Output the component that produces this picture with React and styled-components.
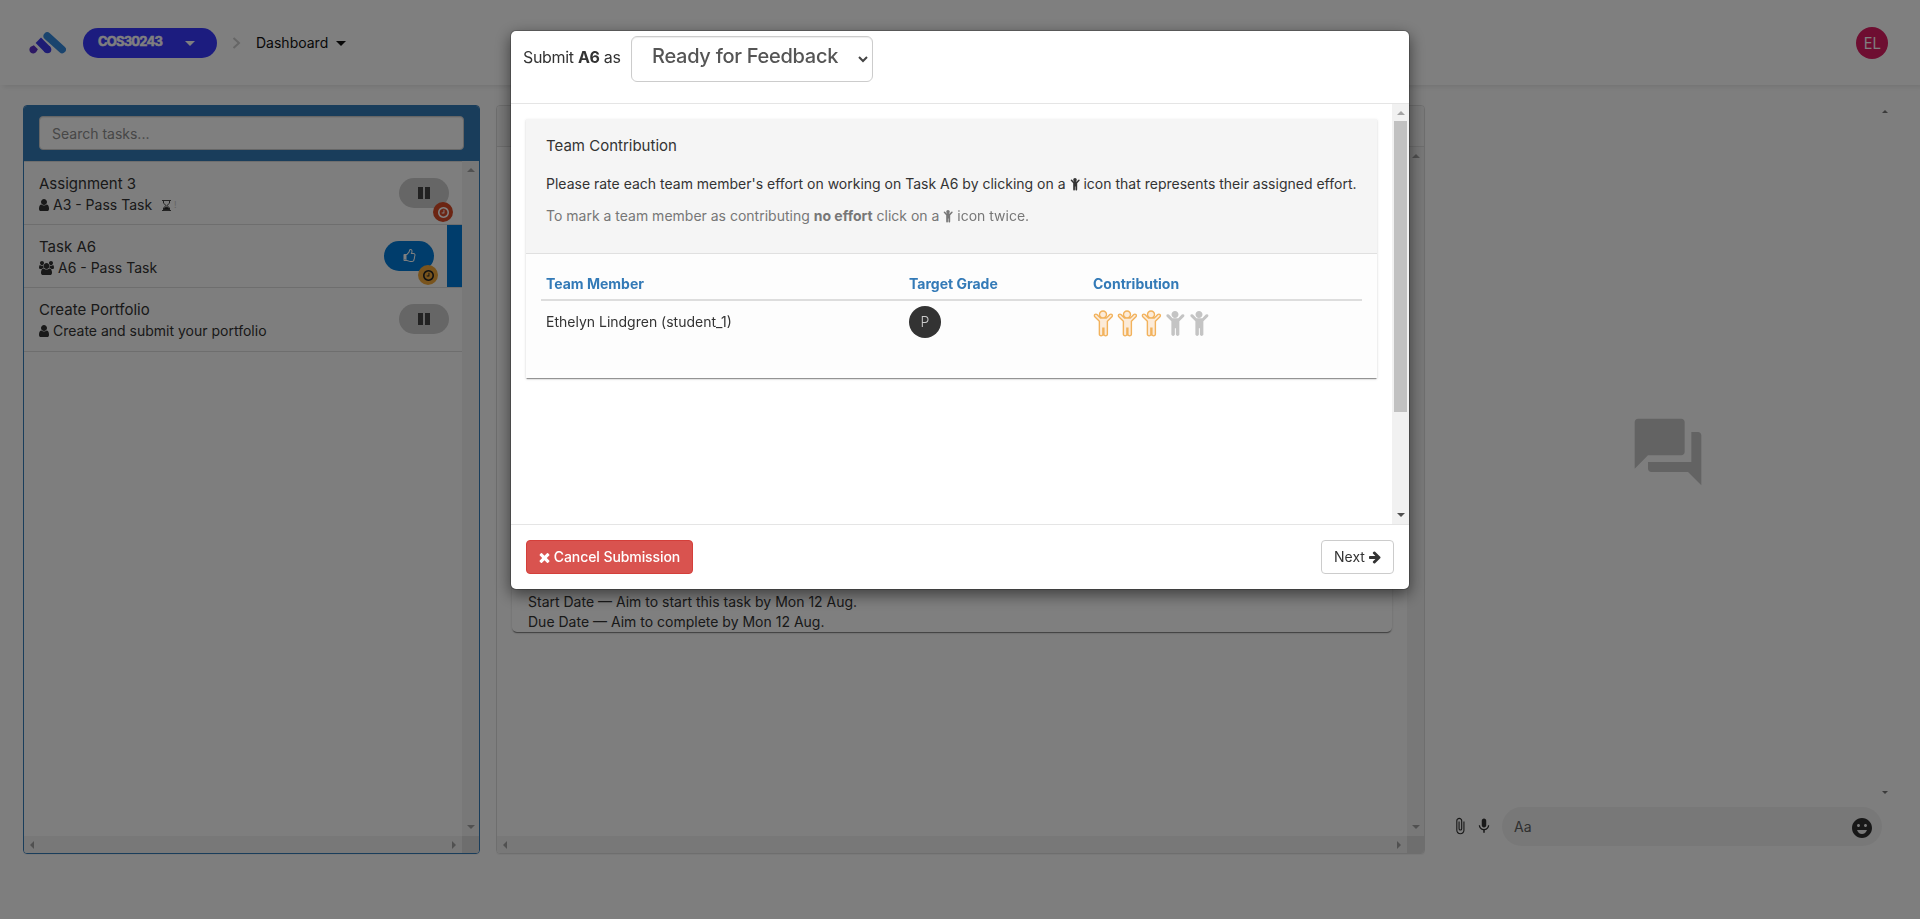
import React from "react";
import styled, { createGlobalStyle } from "styled-components";
import { MdQuestionAnswer, MdAttachFile, MdMic, MdEmojiEmotions } from "react-icons/md";

const Global = createGlobalStyle`
  *, *::before, *::after { box-sizing: border-box; }
  body { margin: 0; overflow: hidden; background: #fff; color: #333;
    font-family: Inter, "Liberation Sans", sans-serif; font-size: 14px; line-height: 20px; }
  svg { display: block; }
`;

const paths = {
  user: ["256 0 1280 1792", "M1536 1399q0 109-62.5 187t-150.5 78h-854q-88 0-150.5-78t-62.5-187q0-85 8.5-160.5t31.5-152 58.5-131 94-89 134.5-34.5q131 128 313 128t313-128q76 0 134.5 34.5t94 89 58.5 131 31.5 152 8.5 160.5zm-256-887q0 159-112.5 271.5t-271.5 112.5-271.5-112.5-112.5-271.5 112.5-271.5 271.5-112.5 271.5 112.5 112.5 271.5z"],
  users: ["64 0 1920 1792", "M657 896q-162 5-265 128h-134q-82 0-138-40.5t-56-118.5q0-353 124-353 6 0 43.5 21t97.5 42.5 119 21.5q67 0 133-23-5 37-5 66 0 139 81 256zm1071 637q0 120-73 189.5t-194 69.5h-874q-121 0-194-69.5t-73-189.5q0-53 3.5-103.5t14-109 26.5-108.5 43-97.5 62-81 85.5-53.5 111.5-20q10 0 43 21.5t73 48 107 48 135 21.5 135-21.5 107-48 73-48 43-21.5q61 0 111.5 20t85.5 53.5 62 81 43 97.5 26.5 108.5 14 109 3.5 103.5zm-1024-1277q0 106-75 181t-181 75-181-75-75-181 75-181 181-75 181 75 75 181zm704 384q0 159-112.5 271.5t-271.5 112.5-271.5-112.5-112.5-271.5 112.5-271.5 271.5-112.5 271.5 112.5 112.5 271.5zm576 225q0 78-56 118.5t-138 40.5h-134q-103-123-265-128 81-117 81-256 0-29-5-66 66 23 133 23 59 0 119-21.5t97.5-42.5 43.5-21q124 0 124 353zm-128-609q0 106-75 181t-181 75-181-75-75-181 75-181 181-75 181 75 75 181z"],
  times: ["256 0 1280 1792", "M1490 1322q0 40-28 68l-136 136q-28 28-68 28t-68-28l-294-294-294 294q-28 28-68 28t-68-28l-136-136q-28-28-28-68t28-68l294-294-294-294q-28-28-28-68t28-68l136-136q28-28 68-28t68 28l294 294 294-294q28-28 68-28t68 28l136 136q28 28 28 68t-28 68l-294 294 294 294q28 28 28 68z"],
  arrow: ["128 0 1536 1792", "M1600 960q0 54-37 91l-651 651q-39 37-91 37-51 0-90-37l-75-75q-38-38-38-91t38-91l293-293h-704q-52 0-84.5-37.5t-32.5-90.5v-128q0-53 32.5-90.5t84.5-37.5h704l-293-294q-38-36-38-90t38-90l75-75q38-38 90-38 53 0 91 38l651 651q37 35 37 90z"],
  thumb: ["64 0 1664 1792", "M384 1344q0-26-19-45t-45-19-45 19-19 45 19 45 45 19 45-19 19-45zm1152-576q0-51-39-89.5t-89-38.5h-352q0-58 48-159.5t48-160.5q0-98-32-145t-128-47q-26 26-38 85t-30.5 125.5-59.5 109.5q-22 23-77 91-4 5-23 30t-31.5 41-34.5 42.5-40 44-38.5 35.5-40 27-35.5 9h-32v640h32q13 0 31.5 3t33 6.5 38 11 35 11.5 35.5 12.5 29 10.5q211 73 342 73h121q192 0 192-167 0-26-5-56 30-16 47.5-52.5t17.5-73.5-18-69q53-50 53-119 0-25-10-55.5t-25-47.5q32-1 53.5-47t21.5-81zm128-1q0 89-49 163 9 33 9 69 0 77-38 144 3 21 3 43 0 101-60 178 1 139-85 219.5t-227 80.5h-129q-96 0-189.5-22.5t-216.5-65.5q-116-40-138-40h-288q-53 0-90.5-37.5t-37.5-90.5v-640q0-53 37.5-90.5t90.5-37.5h274q36-24 137-155 58-75 107-128 24-25 35.5-85.5t30.5-126.5 62-108q39-37 90-37 84 0 151 32.5t102 101.5 35 186q0 93-48 192h176q104 0 180 76t76 179z"],
  child: ["256 0 1280 1792", "M1468 492l-292 292v824q0 46-33 79t-79 33-79-33-33-79v-384h-64v384q0 46-33 79t-79 33-79-33-33-79v-824l-292-292q-28-28-28-68t28-68q29-28 68.5-28t67.5 28l228 228h368l228-228q28-28 68-28t68 28q28 29 28 68.5t-28 67.5zm-348-140q0 93-65.5 158.5t-158.5 65.5-158.5-65.5-65.5-158.5 65.5-158.5 158.5-65.5 158.5 65.5 65.5 158.5z"],
  clock: ["128 128 1536 1536", "M1024 544v448q0 14-9 23t-23 9h-320q-14 0-23-9t-9-23v-64q0-14 9-23t23-9h224v-352q0-14 9-23t23-9h64q14 0 23 9t9 23zm416 352q0-148-73-273t-198-198-273-73-273 73-198 198-73 273 73 273 198 198 273 73 273-73 198-198 73-273zm224 0q0 209-103 385.5t-279.5 279.5-385.5 103-385.5-103-279.5-279.5-103-385.5 103-385.5 279.5-279.5 385.5-103 385.5 103 279.5 279.5 103 385.5z"],
  pause: ["0 0 12 12", "M0 0h5v12h-5zM7 0h5v12h-5z"],
};

const Glyph = ({ name, w, h, ...rest }) => (
  <svg width={w} height={h} viewBox={paths[name][0]} fill="currentColor" overflow="visible" {...rest}>
    <path d={paths[name][1]} />
  </svg>
);

const Page = styled.div`height: 919px; display: flex; flex-direction: column; background: #fdfdfd;`;
const Header = styled.header`
  height: 85px; flex: none; padding: 1px 32px 0 29px; display: flex; align-items: center;
  background: #fff; box-shadow: 3px 2px 5px rgba(0, 0, 0, 0.09);
`;
const UnitPill = styled.div`
  width: 134px; height: 30px; margin-left: 17px; padding: 0 22px 0 15px; border-radius: 15px;
  background: #3939ff; color: #fff; display: flex; justify-content: space-between; align-items: center;
`;
const UnitCode = styled.span`
  font: 700 13px/18px Inter, sans-serif; letter-spacing: -0.8px; -webkit-text-stroke: 0.5px; margin-top: -5px;
`;
const Caret = styled.i`border: 5px solid transparent; border-top-color: currentColor; border-bottom: 0; margin-top: 1px;`;
const CrumbArrow = styled.svg`margin-left: 15px;`;
const Crumb = styled.div`display: flex; align-items: center; gap: 8px; color: #111; margin-left: 15px;`;
const Avatar = styled.div`
  width: 32px; height: 32px; border-radius: 50%; background: #dc1d62; color: #fff; margin-left: auto;
  display: flex; align-items: center; justify-content: center; font: 16px/32px "Open Sans", sans-serif;
`;

const Columns = styled.main`flex: 1; display: flex; align-items: flex-start; padding: 20px 35px 0 23px;`;
const Panel = styled.section`
  width: ${(p) => p.$w}px; height: 749px; margin-right: ${(p) => p.$gap}px; display: flex; flex-direction: column;
  border: 1px solid ${(p) => p.$line}; border-radius: 4px; overflow: hidden;
  box-shadow: 0 1px 1px rgba(0, 0, 0, 0.05);
`;
const SearchBar = styled.div`
  height: 55px; flex: none; background: #337ab7; padding: 10px 15px 0;
`;
const SearchInput = styled.div`
  height: 34px; border: 1px solid #ccc; border-radius: 4px; background: #fff; padding: 7px 12px;
  line-height: 20px; color: #8e8e8e; box-shadow: inset 0 1px 1px rgba(0, 0, 0, 0.075);
`;
const PlainBar = styled.div`height: 41px; flex: none; background: #f5f5f5; border-bottom: 1px solid #ddd;`;
const Scroller = styled.div`
  flex: 1; min-height: 0; display: grid; grid-template: minmax(0, 1fr) 17px / minmax(0, 1fr) 17px;
`;
const Track = styled.div`
  background: #f1f1f1; color: #a3a3a3; display: flex; justify-content: space-between; align-items: center;
  flex-direction: ${(p) => (p.$row ? "row" : "column")}; padding: ${(p) => (p.$row ? "0 6px" : "7px 0")};
`;
const Corner = styled.div`background: #dcdcdc;`;
const Tri = styled.i`
  flex: none; border: ${(p) => p.$s || 4}px solid transparent;
  border-${(p) => p.$to}: 0;
  border-${(p) => ({ top: "bottom", bottom: "top", left: "right", right: "left" })[p.$to]}-color: ${(p) => p.$c || "#a3a3a3"};
`;

const TaskRow = styled.div`
  height: 63px; border-bottom: 1px solid #ddd; display: flex; padding-left: 15px;
  ${(p) => p.$first && "height: 64px; border-top: 1px solid #ddd;"}
  ${(p) => p.$last && "height: 64px;"}
`;
const TaskText = styled.div`flex: 1; padding-top: 10px;`;
const TaskTitle = styled.div`font-size: 15px; line-height: 23px; height: 23px;`;
const TaskMeta = styled.div`display: flex; align-items: center; gap: 4px; height: 20px; font-size: 14px;`;
const Late = styled.span`display: flex; align-items: center; margin-left: 6px; gap: 3px; font-size: 9px; color: #ccc;`;
const StatusPill = styled.div`
  position: relative; width: 50px; height: 30px; margin: 16px 13px 0 0; border-radius: 15px;
  background: ${(p) => p.$bg}; color: ${(p) => p.$fg}; display: flex; align-items: center; justify-content: center;
`;
const Badge = styled.span`
  position: absolute; right: -4px; bottom: -14px; width: 20px; height: 20px; border-radius: 50%;
  background: ${(p) => p.$bg}; color: ${(p) => p.$fg}; display: flex; align-items: center; justify-content: center;
`;
const SelectedBar = styled.div`width: 15px; background: #007bd8;`;

const DatesPane = styled.div`padding: 0 15px;`;
const DatesCard = styled.div`
  height: 485px; padding: 0 16px; border-radius: 5px; background: #fff; display: flex; flex-direction: column;
  justify-content: flex-end; box-shadow: 0 2px 1px -1px rgba(0, 0, 0, 0.35), 0 1px 1px rgba(0, 0, 0, 0.14), 0 1px 3px rgba(0, 0, 0, 0.12);
`;
const DateLine = styled.div`line-height: 20px;`;

const Chat = styled.section`
  flex: 1; height: 749px; display: flex; flex-direction: column;
`;
const ChatBody = styled.div`height: 700px; display: flex; color: #c6c6c6; padding-left: 1px;`;
const ChatEmpty = styled.div`flex: 1; display: flex; justify-content: center; align-items: flex-start; padding: 307px 0 0 27px;`;
const ChatTrack = styled.div`width: 6px; padding: 5px 0 11px; margin-right: -3px; display: flex; flex-direction: column; justify-content: space-between;`;
const Composer = styled.div`display: flex; align-items: center; height: 39px; margin-top: 2px; padding: 0 3px 0 26px; color: #303030;`;
const ComposerIcons = styled.div`display: flex; gap: 6px; padding-bottom: 2px;`;
const MessageBox = styled.div`
  flex: 1; height: 39px; margin-left: 9px; padding: 2px 8px 0 12px; border-radius: 20px; background: #f1f1f1;
  display: flex; align-items: center; justify-content: space-between; color: #606060;
`;
const Placeholder = styled.span`padding-bottom: 2px;`;

const Backdrop = styled.div`position: fixed; inset: 0; background: rgba(0, 0, 0, 0.5); display: flex; justify-content: center; align-items: flex-start; padding-top: 30px;`;
const Modal = styled.div`
  width: 900px; height: 560px; background: #fff; background-clip: padding-box; border: 1px solid rgba(0, 0, 0, 0.2);
  border-radius: 6px; box-shadow: 0 5px 15px rgba(0, 0, 0, 0.5); display: flex; flex-direction: column; overflow: hidden;
`;
const ModalHeader = styled.div`height: 73px; border-bottom: 1px solid #e5e5e5; display: flex; padding: 5px 12px;`;
const SubmitLabel = styled.div`font-size: 16px; letter-spacing: -0.32px; line-height: 22px; margin-top: 10px; width: 108px; white-space: nowrap;`;
const Select = styled.div`
  width: 242px; height: 46px; border: 1px solid #ccc; border-radius: 6px; padding: 7px 4px 0 20px;
  font-size: 20px; font-weight: 500; letter-spacing: -0.28px; line-height: 24px; color: #555; display: flex; justify-content: space-between;
  box-shadow: inset 0 1px 1px rgba(0, 0, 0, 0.075); white-space: nowrap;
`;
const SelectArrow = styled.svg`margin-top: 12px;`;
const ModalBody = styled.div`height: 420px; display: flex; padding-left: 15px;`;
const ModalScroll = styled.div`width: 17px; background: #f1f1f1; display: flex; flex-direction: column; align-items: center; padding: 7px 0 7px;`;
const Thumb = styled.div`width: 13px; height: 291px; margin: 6px 0 auto; background: #c1c1c1;`;
const TeamCard = styled.div`
  width: 851px; height: 259px; margin: 15px 15px 0 0; background: #fdfdfd; display: flex; flex-direction: column;
  box-shadow: 0 2px 1px -1px rgba(0, 0, 0, 0.28), 0 1px 1px rgba(0, 0, 0, 0.14), 0 1px 3px rgba(0, 0, 0, 0.12);
`;
const TeamIntro = styled.div`height: 135px; background: #f5f5f5; border-bottom: 1px solid #e0e0e0; padding: 16px 0 0 20px; white-space: nowrap;`;
const Heading = styled.div`font-size: 15px; line-height: 22px;`;
const Para = styled.p`margin: ${(p) => p.$mt}px 0 0; line-height: 20px; color: ${(p) => p.$c || "#333"};`;
const InlineChild = styled(Glyph)`display: inline-block; vertical-align: -2px;`;
const Table = styled.div`margin: 20px 15px 0;`;
const Row = styled.div`display: grid; grid-template-columns: 363px 184px 1fr; padding-left: 5px; align-items: center; height: ${(p) => p.$h}px;`;
const HeadRow = styled(Row)`color: #337ab7; font-weight: 700; border-bottom: 2px solid #ddd; padding-bottom: 6px;`;
const Grade = styled.div`
  width: 32px; height: 32px; border-radius: 50%; background: #333; color: #ccc;
  display: flex; align-items: center; justify-content: center; font-weight: 300;
`;
const Rating = styled.div`display: flex; gap: 4px; color: #c4c4c4; padding-top: 1px;`;
const ModalFooter = styled.div`height: 65px; border-top: 1px solid #e5e5e5; padding: 15px; display: flex; justify-content: space-between;`;
const Button = styled.button`
  height: 34px; width: ${(p) => p.$w}px; border: 1px solid ${(p) => (p.$danger ? "#d43f3a" : "#ccc")}; border-radius: 4px;
  background: ${(p) => (p.$danger ? "#d9534f" : "#fff")}; color: ${(p) => (p.$danger ? "#fff" : "#333")};
  font: ${(p) => (p.$danger ? 500 : 400)} 14px/20px Inter, sans-serif; display: flex; align-items: center; justify-content: center; gap: 4px; padding: 0;
  white-space: nowrap; letter-spacing: ${(p) => (p.$danger ? "-0.08px" : 0)};
`;

const Logo = () => (
  <svg width="37" height="23" viewBox="0 0 37 23">
    <g stroke="#3d39e8" fill="none" strokeWidth="7.6">
      <path d="M9.3 8.3L18.5 17.5" />
      <path d="M18.5 17.500h.01" strokeLinecap="round" />
    </g>
    <path d="M18.3 4.100L33.1 17.500" stroke="#3489dd" strokeWidth="7.6" strokeLinecap="round" />
    <path d="M4.900 13.200L8.900 17.200L7.200 20A3.800 3.800 0 1 1 1.700 14.800Z" fill="#5a30c8" />
  </svg>
);

const tasks = [
  { title: "Assignment 3", meta: "A3 - Pass Task", icon: "user", late: true, badge: ["#d84a26", "#fff"] },
  { title: "Task A6", meta: "A6 - Pass Task", icon: "users", selected: true, badge: ["#f2a93b", "#222"] },
  { title: "Create Portfolio", meta: "Create and submit your portfolio", icon: "user" },
];

const Task = ({ task, first, last }) => (
  <TaskRow $first={first} $last={last}>
    <TaskText>
      <TaskTitle>{task.title}</TaskTitle>
      <TaskMeta>
        <Glyph name={task.icon} w={task.icon === "users" ? 15 : 10} h={14} />
        {task.meta}
        {task.late && (
          <Late>
            <svg width="9" height="11" viewBox="0 0 9 11" fill="none" stroke="#333" strokeWidth=".9">
              <path d="M0 .5h9M0 10.5h9M1.5 1v2.2L4 5.5 1.5 8v2.5M7.5 1v2.2L5 5.5 7.5 8v2.5" />
              <path d="M2 9.5V8.5L4.500 7 7 8.500V9.500z" fill="#222" />
            </svg>
            <span>!</span>
          </Late>
        )}
      </TaskMeta>
    </TaskText>
    <StatusPill $bg={task.selected ? "#007bd8" : "#ccc"} $fg={task.selected ? "#fff" : "#444"}>
      <Glyph name={task.selected ? "thumb" : "pause"} w={task.selected ? 13 : 12} h={task.selected ? 14 : 12} />
      {task.badge && (
        <Badge $bg={task.badge[0]} $fg={task.badge[1]}><Glyph name="clock" w={11} h={11} /></Badge>
      )}
    </StatusPill>
    {task.selected && <SelectedBar />}
  </TaskRow>
);

const ScrollArea = ({ children }) => (
  <Scroller>
    <div>{children}</div>
    <Track><Tri $to="top" /><Tri $to="bottom" /></Track>
    <Track $row><Tri $to="left" /><Tri $to="right" /></Track>
    <Corner />
  </Scroller>
);

export default function App() {
  return (
    <>
      <Global />
      <Page>
        <Header>
          <Logo />
          <UnitPill><UnitCode>COS30243</UnitCode><Caret /></UnitPill>
          <CrumbArrow width="9" height="12" viewBox="0 0 9 12" fill="none" stroke="#ccc" strokeWidth="2">
            <path d="M1.500 1l5.500 5-5.500 5" />
          </CrumbArrow>
          <Crumb>Dashboard<Caret /></Crumb>
          <Avatar>EL</Avatar>
        </Header>
        <Columns>
          <Panel $w={457} $gap={16} $line="#337ab7">
            <SearchBar><SearchInput>Search tasks...</SearchInput></SearchBar>
            <ScrollArea>
              {tasks.map((t, i) => <Task key={t.title} task={t} first={i === 0} last={i === 2} />)}
            </ScrollArea>
          </Panel>
          <Panel $w={929} $gap={0} $line="#ddd">
            <PlainBar />
            <ScrollArea>
              <DatesPane>
                <DatesCard>
                  <DateLine>Start Date — Aim to start this task by Mon 12 Aug.</DateLine>
                  <DateLine>Due Date — Aim to complete by Mon 12 Aug.</DateLine>
                </DatesCard>
              </DatesPane>
            </ScrollArea>
          </Panel>
          <Chat>
            <ChatBody>
              <ChatEmpty><MdQuestionAnswer size={80} /></ChatEmpty>
              <ChatTrack><Tri $to="top" $s={3} $c="#777" /><Tri $to="bottom" $s={3} $c="#777" /></ChatTrack>
            </ChatBody>
            <Composer>
              <ComposerIcons><MdAttachFile size={18} /><MdMic size={18} /></ComposerIcons>
              <MessageBox><Placeholder>Aa</Placeholder><MdEmojiEmotions size={24} color="#303030" /></MessageBox>
            </Composer>
          </Chat>
        </Columns>
      </Page>
      <Backdrop>
        <Modal>
          <ModalHeader>
            <SubmitLabel>Submit <b>A6</b> as</SubmitLabel>
            <Select>
              Ready for Feedback
              <SelectArrow width="10" height="7" viewBox="0 0 10 7" fill="none" stroke="#444" strokeWidth="2">
                <path d="M1 1l4 4 4-4" />
              </SelectArrow>
            </Select>
          </ModalHeader>
          <ModalBody>
            <TeamCard>
              <TeamIntro>
                <Heading>Team Contribution</Heading>
                <Para $mt={17}>
                  Please rate each team member's effort on working on Task A6 by clicking on a <InlineChild name="child" w={10} h={14} /> icon that represents their assigned effort.
                </Para>
                <Para $mt={12} $c="#777">
                  To mark a team member as contributing <b>no effort</b> click on a <InlineChild name="child" w={10} h={14} /> icon twice.
                </Para>
              </TeamIntro>
              <Table>
                <HeadRow $h={27}><span>Team Member</span><span>Target Grade</span><span>Contribution</span></HeadRow>
                <Row $h={42}>
                  <span>Ethelyn Lindgren (student_1)</span>
                  <Grade>P</Grade>
                  <Rating>
                    {[1, 2, 3, 4, 5].map((n) => (
                      <Glyph key={n} name="child" w={20} h={28}
                        {...(n < 4 ? { fill: "#fcebd8", stroke: "#f2b25c", strokeWidth: 90 } : {})} />
                    ))}
                  </Rating>
                </Row>
              </Table>
            </TeamCard>
            <ModalScroll>
              <Tri $to="top" /><Thumb /><Tri $to="bottom" $c="#505050" />
            </ModalScroll>
          </ModalBody>
          <ModalFooter>
            <Button $w={167} $danger><Glyph name="times" w={11} h={15} />Cancel Submission</Button>
            <Button $w={73}>Next <Glyph name="arrow" w={12} h={14} /></Button>
          </ModalFooter>
        </Modal>
      </Backdrop>
    </>
  );
}
